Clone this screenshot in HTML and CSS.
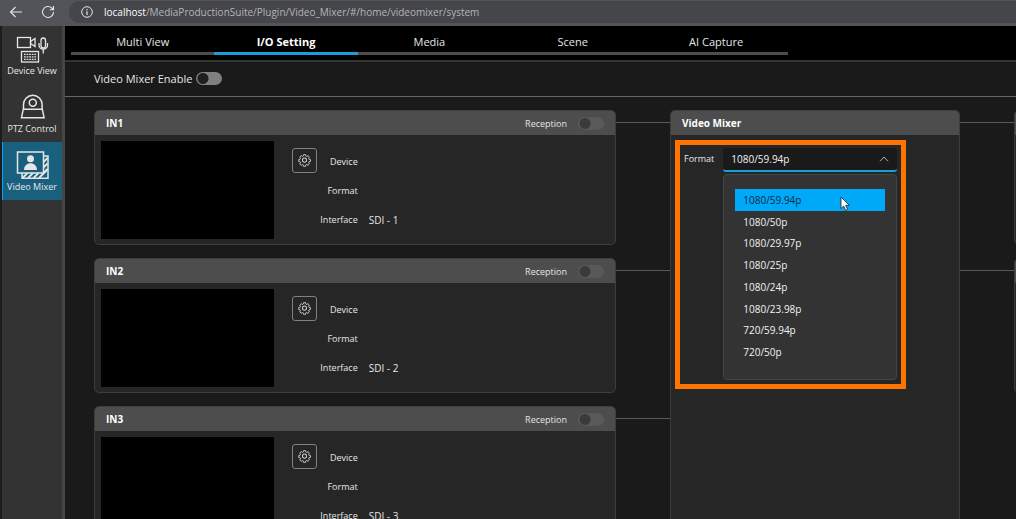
FILE: index.html
```html
<!DOCTYPE html>
<html lang="en">
<head>
<meta charset="utf-8">
<title>Video Mixer</title>
<link rel="stylesheet" href="styles.css">
</head>
<body>
<svg class="sprite" aria-hidden="true">
  <symbol id="gear" viewBox="0 0 24 24">
    <g fill="none" stroke="currentColor" stroke-width="2" stroke-linejoin="round">
      <path d="M10 2h4l.7 3 1.6.7 2.7-1.6 2.9 2.9-1.6 2.7.7 1.6 3 .7v4l-3 .7-.7 1.6 1.6 2.7-2.9 2.9-2.7-1.6-1.6.7-.7 3h-4l-.7-3-1.6-.7-2.7 1.6-2.9-2.9 1.6-2.7-.7-1.6-3-.7v-4l3-.7.7-1.6-1.6-2.7 2.9-2.9 2.7 1.6 1.6-.7z" transform="translate(1.300 -.6) scale(.9)"/>
      <circle cx="12" cy="11.300" r="3.800"/>
    </g>
  </symbol>
</svg>

<header class="browser">
  <button class="nav-btn" aria-label="Back">
    <svg width="14" height="12" viewBox="0 0 14 12"><path d="M6.500 1 1.500 6l5 5M1.500 6H13" fill="none" stroke="currentColor" stroke-width="1.100"/></svg>
  </button>
  <button class="nav-btn" aria-label="Reload">
    <svg width="14" height="14" viewBox="0 0 14 14"><path d="M12.500 7A5.500 5.500 0 1 1 10.800 3l1.700 1.600M12.500 1v3.700H8.800" fill="none" stroke="currentColor" stroke-width="1.100"/></svg>
  </button>
  <div class="address">
    <svg width="12" height="12" viewBox="0 0 12 12"><circle cx="6" cy="6" r="5.300" fill="none" stroke="currentColor"/><path d="M6 5.200V9M6 3v1.200" stroke="currentColor" stroke-width="1.200"/></svg>
    <span class="url"><b>localhost</b>/MediaProductionSuite/Plugin/Video_Mixer/#/home/videomixer/system</span>
  </div>
</header>

<div class="app">
  <nav class="sidebar" aria-label="Plugins">
    <a class="side-item" href="#device">
      <svg width="34" height="28" viewBox="0 0 34 28" fill="none" stroke="currentColor" stroke-width="1.300">
        <rect x="2.500" y="2.500" width="13" height="10"/>
        <path d="M15.500 6.500l4.500-3v8l-4.500-3z"/>
        <rect x="26" y="3" width="4.500" height="10" rx="2.250"/>
        <path d="M24 8v2a4.250 4.250 0 0 0 8.500 0V8M28.250 14.500v4"/>
        <rect x="6.500" y="16.500" width="17" height="10.500"/>
        <path d="M9 19.300h12M9 21.800h12M9 24.300h12" stroke-dasharray="1.700 .9"/>
      </svg>
      <span>Device View</span>
    </a>
    <a class="side-item" href="#ptz">
      <svg width="34" height="28" viewBox="0 0 34 28" fill="none" stroke="currentColor" stroke-width="1.500">
        <path d="M8.500 17v-5.500a9.300 9.300 0 0 1 18.600 0V17M8.300 16.200h19l1.800 8.500H6.500z"/>
        <circle cx="17.800" cy="9.800" r="3.500"/>
      </svg>
      <span>PTZ Control</span>
    </a>
    <a class="side-item active" href="#mixer" aria-current="page">
      <svg width="34" height="28" viewBox="0 0 34 28" fill="none" stroke="currentColor" stroke-width="1.500">
        <rect x="2.500" y="1" width="26" height="21"/>
        <circle cx="15.500" cy="7.800" r="3.500" fill="currentColor" stroke="none"/>
        <path d="M9 19c0-9 13-9 13 0z" fill="currentColor" stroke="none"/>
        <path d="M28.500 5H33v22.300H7V22"/>
        <path d="M28.500 11l4-4M28.500 16.500l4-4M28.500 22l4-4M7.500 27l5-5M13 27l5-5M18.500 27l5-5M24 27l8.500-8.500" stroke-width="1.800"/>
      </svg>
      <span>Video Mixer</span>
    </a>
  </nav>

  <main class="main">
    <nav class="tabs" aria-label="Sections">
      <a class="tab" href="#multi">Multi View</a>
      <a class="tab active" href="#io" aria-current="page">I/O Setting</a>
      <a class="tab" href="#media">Media</a>
      <a class="tab" href="#scene">Scene</a>
      <a class="tab" href="#ai">AI Capture</a>
    </nav>

    <div class="enable">
      <label for="enable">Video Mixer Enable</label>
      <input class="toggle" type="checkbox" role="switch" id="enable">
    </div>

    <div class="board">
      <div class="column">
        <section class="card">
          <header class="card-head"><h2>IN1</h2><label for="rec1">Reception</label><input class="toggle dim" type="checkbox" role="switch" id="rec1"></header>
          <div class="card-body">
            <div class="preview"></div>
            <button class="gear" aria-label="IN1 settings"><svg width="13" height="13"><use href="#gear"/></svg></button>
            <dl class="info"><dt>Device</dt><dd></dd><dt>Format</dt><dd></dd><dt>Interface</dt><dd>SDI - 1</dd></dl>
          </div>
        </section>
        <section class="card">
          <header class="card-head"><h2>IN2</h2><label for="rec2">Reception</label><input class="toggle dim" type="checkbox" role="switch" id="rec2"></header>
          <div class="card-body">
            <div class="preview"></div>
            <button class="gear" aria-label="IN2 settings"><svg width="13" height="13"><use href="#gear"/></svg></button>
            <dl class="info"><dt>Device</dt><dd></dd><dt>Format</dt><dd></dd><dt>Interface</dt><dd>SDI - 2</dd></dl>
          </div>
        </section>
        <section class="card">
          <header class="card-head"><h2>IN3</h2><label for="rec3">Reception</label><input class="toggle dim" type="checkbox" role="switch" id="rec3"></header>
          <div class="card-body">
            <div class="preview"></div>
            <button class="gear" aria-label="IN3 settings"><svg width="13" height="13"><use href="#gear"/></svg></button>
            <dl class="info"><dt>Device</dt><dd></dd><dt>Format</dt><dd></dd><dt>Interface</dt><dd>SDI - 3</dd></dl>
          </div>
        </section>
      </div>

      <div class="column"><div class="wire"></div><div class="wire"></div><div class="wire"></div></div>

      <section class="card mixer">
        <header class="card-head"><h2>Video Mixer</h2></header>
        <div class="mixer-body">
          <div class="highlight">
            <label for="format">Format</label>
            <div class="dropdown">
              <div class="select-wrap">
                <select id="format"><option>1080/59.94p</option></select>
                <svg class="chevron" width="10" height="6" viewBox="0 0 10 6"><path d="M1 5.300 5 1l4 4.300" fill="none" stroke="currentColor"/></svg>
              </div>
              <ul class="options" role="listbox" aria-label="Format">
                <li role="option" aria-selected="true">1080/59.94p
                  <svg class="cursor" width="11" height="16" viewBox="0 0 11 16"><path d="M1 1v11.500l2.700-2.400 1.900 4.200 2-.9-1.900-4.100h3.600z" fill="#fff" stroke="#222" stroke-width=".8"/></svg>
                </li>
                <li role="option">1080/50p</li>
                <li role="option">1080/29.97p</li>
                <li role="option">1080/25p</li>
                <li role="option">1080/24p</li>
                <li role="option">1080/23.98p</li>
                <li role="option">720/59.94p</li>
                <li role="option">720/50p</li>
              </ul>
            </div>
          </div>
        </div>
      </section>

      <div class="column"><div class="wire"></div><div class="wire"></div></div>

      <div class="column outputs"><section class="card"><header class="card-head"></header></section><section class="card"><header class="card-head"></header></section></div>
    </div>
  </main>
</div>
</body>
</html>
```
FILE: styles.css
```css
* { box-sizing: border-box; }

body {
  margin: 0;
  height: 100vh;
  display: flex;
  flex-direction: column;
  overflow: hidden;
  background: #1a1a1a;
  color: #e6e6e6;
  font-family: "Open Sans", "Noto Sans", sans-serif;
  font-size: 10px;
}

h2, dl, dd, ul { margin: 0; padding: 0; }
a { color: inherit; text-decoration: none; }
button { padding: 0; color: inherit; background: none; border: 0; font: inherit; }
.sprite { display: none; }

.browser {
  flex: none;
  height: 26px;
  display: flex;
  align-items: center;
  gap: 18px;
  padding: 0 0 2px 9px;
  background: #53545a;
}
.nav-btn { display: grid; place-items: center; }
.address {
  flex: 1;
  height: 22px;
  margin-left: -4px;
  padding-left: 12px;
  display: flex;
  align-items: center;
  gap: 11px;
  background: #45464a;
  border-radius: 11px 0 0 11px;
}
.url { color: #b4b5b8; }
.url b { color: #fff; font-weight: 500; }

.app { flex: 1; min-height: 0; display: flex; }

.sidebar {
  flex: none;
  width: 65px;
  background: #333;
  border-left: 2px solid #1c1c1c;
  border-right: 3px solid #454545;
}
.side-item {
  height: 58px;
  display: flex;
  flex-direction: column;
  align-items: center;
  justify-content: flex-end;
  gap: 1px;
  padding-bottom: 6px;
  font-size: 9px;
  line-height: 14px;
  white-space: nowrap;
}
.side-item.active { background: #19607f; box-shadow: inset 1px 0 #00a8ff; }

.main { flex: 1; min-width: 0; display: flex; flex-direction: column; }

.tabs {
  flex: none;
  height: 36px;
  display: flex;
  align-items: flex-start;
  padding: 0 24% 0 6px;
  background: #000;
  border-bottom: 2px solid #333;
}
.tab {
  flex: 1;
  height: 29px;
  border-bottom: 3px solid #4d4d4d;
  text-align: center;
  font-size: 11px;
  line-height: 31px;
}
.tab.active { border-color: #1a9fdc; color: #fff; font-weight: 700; }

.enable {
  flex: none;
  height: 35px;
  display: flex;
  align-items: center;
  gap: 4px;
  padding: 0 0 2px 29px;
  border-bottom: 1px solid #666;
  font-size: 11px;
}

.toggle {
  appearance: none;
  margin: 0;
  width: 26px;
  height: 13px;
  border-radius: 7px;
  background: radial-gradient(circle at 7px 50%, #1f1f1f 5px, transparent 6px) #808080;
}
.toggle.dim { background: radial-gradient(circle at 7px 50%, #3a3a3a 5px, transparent 6px) #595959; }

.board {
  flex: 1;
  min-height: 0;
  display: grid;
  grid-template-columns: 9fr 54px 5fr 54px 2px;
  padding: 13px 0 0 29px;
}
.column { display: flex; flex-direction: column; gap: 13px; min-width: 0; }

.card {
  flex: none;
  min-height: 135px;
  background: #262626;
  border: 1px solid #3d3d3d;
  border-radius: 5px;
  overflow: hidden;
}
.card-head {
  height: 24px;
  display: flex;
  align-items: center;
  gap: 11px;
  padding: 0 11px;
  background: #4d4d4d;
  font-size: 9px;
}
.card-head h2 { flex: 1; color: #fff; font-size: 10px; }
.card-body { display: flex; padding: 6px 6px 5px; }
.preview { flex: none; width: 34%; height: 98px; background: #000; }
.gear {
  width: 25px;
  height: 25px;
  margin: 7px 0 0 18px;
  display: grid;
  place-items: center;
  color: #c8c8c8;
  border: 1px solid #808080;
  border-radius: 3px;
}
.info {
  flex: 1;
  display: grid;
  grid-template-columns: 41px 1fr;
  grid-auto-rows: 29px;
  column-gap: 11px;
  align-items: center;
  padding-top: 6px;
}
.info dt { font-size: 9px; text-align: right; }

.wire { height: 135px; padding-top: 12px; }
.wire::before { content: ""; display: block; height: 1px; background: #595959; }

.mixer { border-bottom: 0; border-radius: 5px 5px 0 0; overflow: visible; }
.mixer .card-head { border-radius: 4px 4px 0 0; }
.mixer-body { padding: 5px 4px; }
.highlight {
  width: 231px;
  display: flex;
  gap: 9px;
  padding: 3px 4px 4px;
  border: 5px solid #ff7300;
}
.highlight label { padding-top: 4px; font-size: 9px; }
.dropdown { flex: 1; }
.select-wrap { display: grid; align-items: center; }
.select-wrap > * { grid-area: 1 / 1; }
.dropdown select {
  appearance: none;
  width: 100%;
  height: 24px;
  padding: 0 8px;
  color: #f2f2f2;
  background: #1a1a1a;
  border: 0;
  border-bottom: 2px solid #1a9fdc;
  border-radius: 3px;
  font: inherit;
}
.chevron { justify-self: end; margin: 0 8px 2px 0; color: #b0b0b0; }
.options {
  min-height: 206px;
  margin-top: 2px;
  padding: 14px 11px 16px;
  display: grid;
  grid-auto-rows: 1fr;
  list-style: none;
  color: #f2f2f2;
  background: #333;
  border: 1px solid #454545;
  border-radius: 4px;
}
.options li { position: relative; display: flex; align-items: center; padding-left: 8px; }
.options [aria-selected="true"] { color: #0d2a3a; background: #00a8f8; }
.cursor { position: absolute; right: 34px; top: 7px; z-index: 1; }

.outputs .card { width: 20px; }
```
